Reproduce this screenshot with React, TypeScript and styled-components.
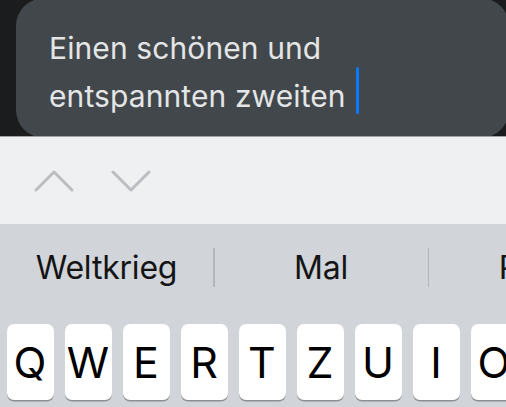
import React from "react";
import styled, { createGlobalStyle } from "styled-components";

const Global = createGlobalStyle`
  html, body { margin: 0; padding: 0; background: #1b1c1e; }
  body { width: 506px; height: 407px; overflow: hidden; }
  #root { width: 506px; height: 407px; }
`;

const Screen = styled.div`
  width: 506px;
  height: 407px;
  display: flex;
  flex-direction: column;
  overflow: hidden;
  font-family: Inter, "Liberation Sans", sans-serif;
`;

const Composer = styled.div`
  height: 136px;
  flex: none;
  background: #1b1c1e;
  overflow: hidden;
  padding-left: 16px;
`;

const Bubble = styled.div`
  margin-top: -2px;
  width: 493px;
  height: 140px;
  box-sizing: border-box;
  background: #41474a;
  border-radius: 28px;
  padding: 26px 0 0 33px;
  color: #e4e5e7;
  font-size: 30px;
  line-height: 48px;
  letter-spacing: 0.1px;
`;

const Line = styled.div`
  display: flex;
  align-items: center;
  height: 48px;
  white-space: nowrap;
`;

const Caret = styled.span`
  display: inline-block;
  width: 3px;
  height: 47px;
  margin: 0 0 12px 10px;
  border-radius: 2px;
  background: #0a7aff;
`;

const Toolbar = styled.div`
  height: 88px;
  flex: none;
  box-sizing: border-box;
  border-top: 1px solid #9fa2a5;
  background: #eff0f2;
  display: flex;
  align-items: center;
  padding-left: 34px;
  gap: 37px;
`;

const Keyboard = styled.div`
  flex: 1;
  background: #d1d4d8;
  display: flex;
  flex-direction: column;
`;

const Suggestions = styled.div`
  height: 87px;
  display: flex;
  align-items: center;
  width: 642px;
`;

const Suggestion = styled.div`
  flex: 1;
  text-align: center;
  font-size: 32px;
  color: #141416;
  letter-spacing: -0.2px;
`;

const Divider = styled.div`
  width: 1.5px;
  height: 39px;
  background: #b3b6ba;
  flex: none;
`;

const KeyRow = styled.div`
  display: flex;
  gap: 11px;
  padding: 13px 0 0 6.5px;
`;

const Key = styled.div`
  flex: none;
  width: 47px;
  height: 76px;
  background: #ffffff;
  border-radius: 7px;
  box-shadow: 0 1.5px 0 #8d8f93;
  display: flex;
  align-items: center;
  justify-content: center;
  font-size: 43px;
  font-weight: 400;
  color: #000;
`;

const Chevron = ({ up }: { up?: boolean }) => (
  <svg width="40" height="24" viewBox="0 0 40 24">
    <polyline
      points={up ? "2,21 20,3 38,21" : "2,3 20,21 38,3"}
      fill="none"
      stroke="#bcbdc0"
      strokeWidth="3"
      strokeLinecap="round"
      strokeLinejoin="round"
    />
  </svg>
);

const letters = ["Q", "W", "E", "R", "T", "Z", "U", "I", "O", "P"];

export default function App() {
  return (
    <>
      <Global />
      <Screen>
        <Composer>
          <Bubble>
            <Line>Einen schönen und</Line>
            <Line>
              entspannten zweiten
              <Caret />
            </Line>
          </Bubble>
        </Composer>
        <Toolbar>
          <Chevron up />
          <Chevron />
        </Toolbar>
        <Keyboard>
          <Suggestions>
            <Suggestion>Weltkrieg</Suggestion>
            <Divider />
            <Suggestion>Mal</Suggestion>
            <Divider />
            <Suggestion>Platz</Suggestion>
          </Suggestions>
          <KeyRow>
            {letters.map((l) => (
              <Key key={l}>{l}</Key>
            ))}
          </KeyRow>
        </Keyboard>
      </Screen>
    </>
  );
}
